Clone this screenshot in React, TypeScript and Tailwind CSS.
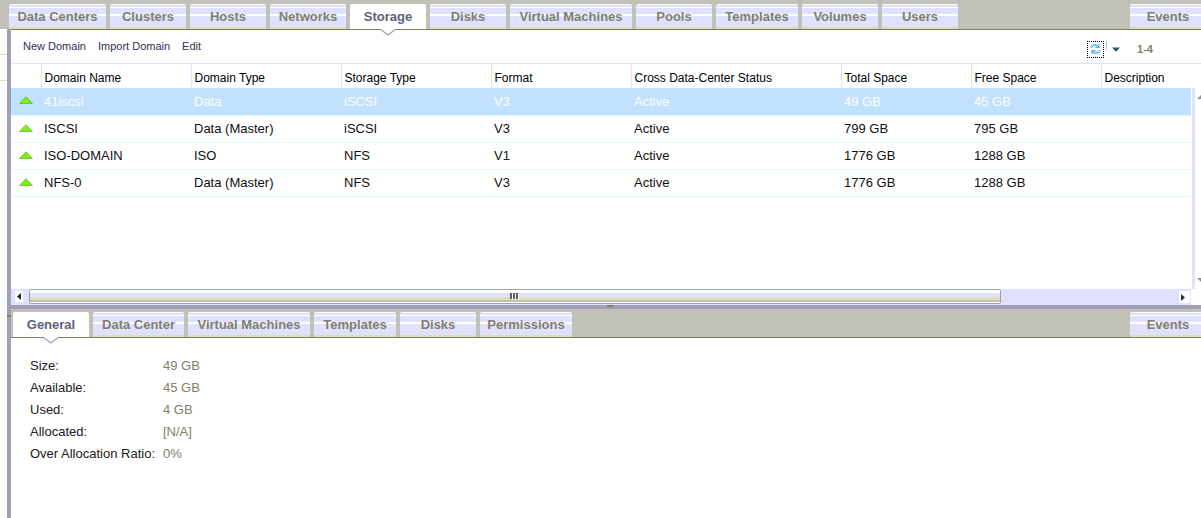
import React from "react";

type Tab = { label: string; width: string };

const mainTabs: Tab[] = [
  { label: "Data Centers", width: "w-[97px]" },
  { label: "Clusters", width: "w-[76px]" },
  { label: "Hosts", width: "w-[76px]" },
  { label: "Networks", width: "w-[76px]" },
  { label: "Storage", width: "w-[76px]" },
  { label: "Disks", width: "w-[76px]" },
  { label: "Virtual Machines", width: "w-[122px]" },
  { label: "Pools", width: "w-[76px]" },
  { label: "Templates", width: "w-[82px]" },
  { label: "Volumes", width: "w-[76px]" },
  { label: "Users", width: "w-[76px]" },
];

const detailTabs: Tab[] = [
  { label: "General", width: "w-[76px]" },
  { label: "Data Center", width: "w-[91px]" },
  { label: "Virtual Machines", width: "w-[122px]" },
  { label: "Templates", width: "w-[82px]" },
  { label: "Disks", width: "w-[76px]" },
  { label: "Permissions", width: "w-[92px]" },
];

const columns = [
  { label: "Domain Name", width: "w-[150px]" },
  { label: "Domain Type", width: "w-[150px]" },
  { label: "Storage Type", width: "w-[150px]" },
  { label: "Format", width: "w-[140px]" },
  { label: "Cross Data-Center Status", width: "w-[210px]" },
  { label: "Total Space", width: "w-[130px]" },
  { label: "Free Space", width: "w-[130px]" },
  { label: "Description", width: "" },
];

const domains = [
  ["41iscsi", "Data", "iSCSI", "V3", "Active", "49 GB", "45 GB", ""],
  ["ISCSI", "Data (Master)", "iSCSI", "V3", "Active", "799 GB", "795 GB", ""],
  ["ISO-DOMAIN", "ISO", "NFS", "V1", "Active", "1776 GB", "1288 GB", ""],
  ["NFS-0", "Data (Master)", "NFS", "V3", "Active", "1776 GB", "1288 GB", ""],
];

const details = [
  ["Size:", "49 GB"],
  ["Available:", "45 GB"],
  ["Used:", "4 GB"],
  ["Allocated:", "[N/A]"],
  ["Over Allocation Ratio:", "0%"],
];

function TabButton({ tab, active, edge }: { tab: Tab; active?: boolean; edge?: boolean }) {
  return (
    <button
      type="button"
      role="tab"
      aria-selected={!!active}
      className={`relative h-[25px] shrink-0 rounded-t-[2px] text-center text-[13px] leading-[25px] font-bold whitespace-nowrap ${tab.width} ${edge ? "-mr-[5px] ml-auto" : ""} ${
        active
          ? "bg-white text-[#60607c]"
          : "bg-[linear-gradient(to_bottom,#fff_0_1px,#e0e0ff_1px_3px,#fff_3px_4px,#e0e0ff_4px_10px,#fff_10px_12px,#e0e0ff_12px_23px,#dedeb8_23px_25px)] text-[#80806c]"
      }`}
    >
      {tab.label}
      {active && (
        <svg className="absolute top-[24px] left-[30px] z-10" width="16" height="8" viewBox="0 0 16 8" aria-hidden="true">
          <path d="M0 0H16V1L8 7.5L0 1Z" fill="#fff" />
          <path d="M0 1L8 7L16 1" fill="none" stroke="#a0a0b0" strokeWidth="1.2" />
        </svg>
      )}
    </button>
  );
}

function RefreshIcon() {
  return (
    <svg width="11" height="12" viewBox="0 0 11 12" aria-hidden="true">
      <path d="M1.2 5C1.6 2.4 4.6 1 7.2 2.6" fill="none" stroke="#80c0fa" strokeWidth="2" />
      <path d="M9.6 0.4V5H5Z" fill="#58b0fa" />
      <path d="M9.8 7C9.4 9.6 6.4 11 3.8 9.4" fill="none" stroke="#80c0fa" strokeWidth="2" />
      <path d="M1.4 11.6V7H6Z" fill="#58b0fa" />
    </svg>
  );
}

export default function App() {
  return (
    <div className="flex min-h-screen flex-col overflow-hidden bg-white font-['Liberation_Sans',Arial,sans-serif] text-[13px]">
      <nav role="tablist" aria-label="Main" className="flex h-[29px] items-end gap-1 bg-[#c1c1b8] pl-[9px]">
        {mainTabs.map((tab) => (
          <TabButton key={tab.label} tab={tab} active={tab.label === "Storage"} />
        ))}
        <TabButton tab={{ label: "Events", width: "w-[76px]" }} edge />
      </nav>

      <div className="flex flex-1">
        <aside className="w-[7px] shrink-0 pt-[25px]">
          <div className="h-[27px] border-y border-[#dedeb8]" />
        </aside>
        <div className="w-1 shrink-0 bg-[#a0a0b8] pt-[286px]">
          <div className="h-[2px] bg-[#80806c]" />
        </div>

        <main className="flex min-w-0 flex-1 flex-col">
          <section className="border-t border-[#80805c]">
            <div className="flex h-[33px] items-center justify-between pr-12 pl-3 text-[11px] text-[#303050]">
              <div className="flex gap-3">
                <button type="button">New Domain</button>
                <button type="button">Import Domain</button>
                <button type="button">Edit</button>
              </div>
              <div className="flex items-center pt-[5px]">
                <button type="button" aria-label="Refresh" className="flex h-[17px] w-[17px] items-center justify-center border border-dotted border-black">
                  <RefreshIcon />
                </button>
                <span className="mb-2 ml-[2px] h-[9px] w-px bg-[#8cc8fa]" />
                <button type="button" aria-label="Refresh rate" className="ml-[5px]">
                  <svg width="8" height="5" viewBox="0 0 8 5" aria-hidden="true">
                    <path d="M0 0.5H8L4 4.8Z" fill="#285868" />
                  </svg>
                </button>
                <span className="ml-[17px] font-bold text-[#80806c]">1-4</span>
              </div>
            </div>

            <div className="relative h-[226px] border-t border-[#e0e0ff]">
              <div className="h-full pr-[10px]">
                <table className="w-full table-fixed border-collapse text-left">
                  <thead>
                    <tr className="h-6 text-[12px]">
                      <th className="w-[30px] p-0" aria-label="Status" />
                      {columns.map((c) => (
                        <th key={c.label} className={`border-l border-[#e0e0ff] p-0 pt-1 pl-[3px] leading-[19px] font-normal whitespace-nowrap text-black ${c.width}`}>
                          {c.label}
                        </th>
                      ))}
                    </tr>
                  </thead>
                  <tbody>
                    {domains.map((row, i) => (
                      <tr key={row[0]} className={`h-[27px] border-b border-[#e0f8ff] ${i === 0 ? "bg-[#c1e1ff] text-white" : "text-[#101010]"}`}>
                        <td className="p-0 pl-2">
                          <svg className="mb-[2px]" width="14" height="8" viewBox="0 0 14 8" role="img" aria-label="Up">
                            <path d="M0.6 7.4L7 0.8L13.4 7.4Z" fill="#80f010" stroke="#58b010" strokeWidth="0.7" />
                          </svg>
                        </td>
                        {row.map((cell, j) => (
                          <td key={j} className="p-0 pl-[3px] whitespace-nowrap">
                            {cell}
                          </td>
                        ))}
                      </tr>
                    ))}
                  </tbody>
                </table>
              </div>
              <div className="absolute top-6 right-0 bottom-0 flex w-[9px] flex-col items-end justify-between border-l-[3px] border-[#e0e0ff] pt-[6px] pb-[6px]">
                <svg width="4" height="5" viewBox="0 0 4 5" aria-hidden="true">
                  <path d="M0 5L4 1V5Z" fill="#9090a0" />
                </svg>
                <svg width="4" height="5" viewBox="0 0 4 5" aria-hidden="true">
                  <path d="M0 0H4V4Z" fill="#9090a0" />
                </svg>
              </div>
            </div>

            <div className="mr-[10px] flex h-4 bg-[#e0e0ff]">
              <div className="flex w-[18px] items-center pb-px pl-1">
                <svg width="8" height="11" viewBox="0 0 8 11" aria-hidden="true">
                  <path d="M0 0H8V11H0Z" fill="#fff" />
                  <path d="M6 2V9L2 5.5Z" fill="#202020" />
                </svg>
              </div>
              <div className="flex min-w-0 flex-1">
                <div className="flex h-[15px] w-[84.5%] items-start justify-center rounded-[2px] border border-[#a0a0b0] bg-[linear-gradient(to_bottom,#fff_0_3px,#e0e0ff_3px_7px,#dedeb8_7px_10px,#c1c1b8_10px_12px,#fff_12px)] pt-[3px]">
                  <svg width="9" height="7" viewBox="0 0 9 7" aria-hidden="true">
                    <path d="M1 0V6M4 0V6M7 0V6" stroke="#606060" strokeWidth="2" />
                    <path d="M2.5 1V7M5.5 1V7M8.5 1V7" stroke="#fff" />
                  </svg>
                </div>
              </div>
              <div className="my-[2px] mr-px flex w-[11px] items-center bg-white pl-[2px]">
                <svg width="4" height="7" viewBox="0 0 4 7" aria-hidden="true">
                  <path d="M0 0V7L4 3.5Z" fill="#303030" />
                </svg>
              </div>
            </div>
          </section>

          <div className="flex h-1 justify-center bg-[#a0a0b8]">
            <div className="ml-2 h-[2px] w-[6px] bg-[#80806c]" />
          </div>

          <section className="flex-1">
            <div role="tablist" aria-label="Details" className="flex h-[29px] items-end gap-1 border-b border-[#80805c] bg-[#c1c1b8] pl-[2px]">
              {detailTabs.map((tab) => (
                <TabButton key={tab.label} tab={tab} active={tab.label === "General"} />
              ))}
              <TabButton tab={{ label: "Events", width: "w-[76px]" }} edge />
            </div>
            <dl className="grid grid-cols-[133px_1fr] px-[19px] pt-[17px] leading-[22px]">
              {details.map(([label, value]) => (
                <React.Fragment key={label}>
                  <dt className="whitespace-nowrap text-[#202020]">{label}</dt>
                  <dd className="text-[#80806c]">{value}</dd>
                </React.Fragment>
              ))}
            </dl>
          </section>
        </main>
      </div>
    </div>
  );
}
